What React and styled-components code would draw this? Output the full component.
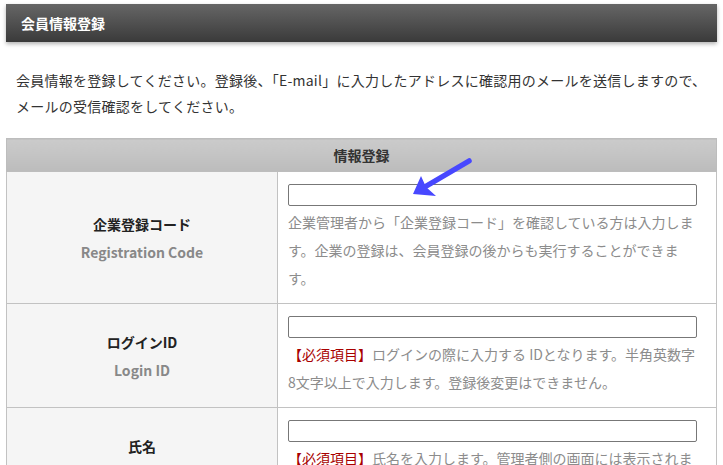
import React from 'react'
import styled, { createGlobalStyle } from 'styled-components'

const GlobalStyle = createGlobalStyle`
    body {
        margin: 0;
        background: #fff;
        font-family: "Noto Sans CJK JP", "Noto Sans", sans-serif;
        font-size: 14px;
        color: #333;
    }
`

const Page = styled.div`
    padding: 4px 6px 0 6px;
    width: 711px;
`

const TitleBar = styled.div`
    height: 38px;
    display: flex;
    align-items: center;
    padding-left: 15px;
    background: linear-gradient(#666666, #3a3a3a);
    box-shadow: 0 2px 4px rgba(0, 0, 0, 0.3);
`

const Title = styled.h1`
    margin: 0;
    font-size: 14px;
    font-weight: bold;
    color: #fff;
`

const Intro = styled.p`
    margin: 25px 0 19px 10px;
    line-height: 26px;
    color: #333;
    letter-spacing: 0.25px;
`

const TableWrap = styled.div`
    position: relative;
`

const Table = styled.table`
    width: 711px;
    border-collapse: collapse;
    table-layout: fixed;
`

const HeadCell = styled.th`
    height: 32px;
    padding: 0;
    background: linear-gradient(#cbcbcb, #bcbcbc);
    border: 1px solid #bdbdbd;
    font-size: 14px;
    font-weight: bold;
    color: #333;
    text-align: center;
`

const LabelCell = styled.td`
    background: #f5f5f5;
    border: 1px solid #c2c2c2;
    text-align: center;
    vertical-align: middle;
    line-height: 28px;
    font-weight: bold;
    padding: 0;
`

const LabelJa = styled.div`
    color: #222;
`

const LabelEn = styled.div`
    color: #888;
`

const FieldCell = styled.td`
    border: 1px solid #c2c2c2;
    padding: 12px 19px 11px 10px;
    vertical-align: top;
`

const Input = styled.input`
    display: block;
    box-sizing: border-box;
    width: 100%;
    height: 22px;
    margin: 0 0 2px 0;
    border: 1px solid #777;
    border-radius: 2px;
    background: #fff;
`

const Note = styled.p`
    margin: 0;
    line-height: 28px;
    color: #8c8c8c;
`

const Required = styled.span`
    color: #a80000;
`

const Arrow = styled.svg`
    position: absolute;
    left: 395px;
    top: 15px;
    pointer-events: none;
`

const rows = [
    {
        ja: '企業登録コード',
        en: 'Registration Code',
        note: '企業管理者から「企業登録コード」を確認している方は入力します。企業の登録は、会員登録の後からも実行することができます。',
    },
    {
        ja: 'ログインID',
        en: 'Login ID',
        required: true,
        note: 'ログインの際に入力する IDとなります。半角英数字8文字以上で入力します。登録後変更はできません。',
    },
    {
        ja: '氏名',
        en: 'Name',
        required: true,
        note: '氏名を入力します。管理者側の画面には表示されます。',
    },
]

const App = () => {
    return (
        <Page>
            <GlobalStyle />
            <TitleBar>
                <Title>会員情報登録</Title>
            </TitleBar>
            <Intro>
                会員情報を登録してください。登録後、「E-mail」に入力したアドレスに確認用のメールを送信しますので、
                <br />
                メールの受信確認をしてください。
            </Intro>
            <TableWrap>
                <Table>
                    <colgroup>
                        <col style={{ width: 271 }} />
                        <col />
                    </colgroup>
                    <thead>
                        <tr>
                            <HeadCell colSpan={2}>情報登録</HeadCell>
                        </tr>
                    </thead>
                    <tbody>
                        {rows.map(row => (
                            <tr key={row.en}>
                                <LabelCell>
                                    <LabelJa>{row.ja}</LabelJa>
                                    <LabelEn>{row.en}</LabelEn>
                                </LabelCell>
                                <FieldCell>
                                    <Input type="text" />
                                    <Note>
                                        {row.required && <Required>【必須項目】</Required>}
                                        {row.note}
                                    </Note>
                                </FieldCell>
                            </tr>
                        ))}
                    </tbody>
                </Table>
                <Arrow width="75" height="50" viewBox="0 0 75 50">
                    <line x1="68" y1="8" x2="22" y2="35" stroke="#4848ff" strokeWidth="5.5" strokeLinecap="round" />
                    <polygon points="12,41 20,23 25,34 35,43" fill="#4848ff" />
                </Arrow>
            </TableWrap>
        </Page>
    )
}

export default App
